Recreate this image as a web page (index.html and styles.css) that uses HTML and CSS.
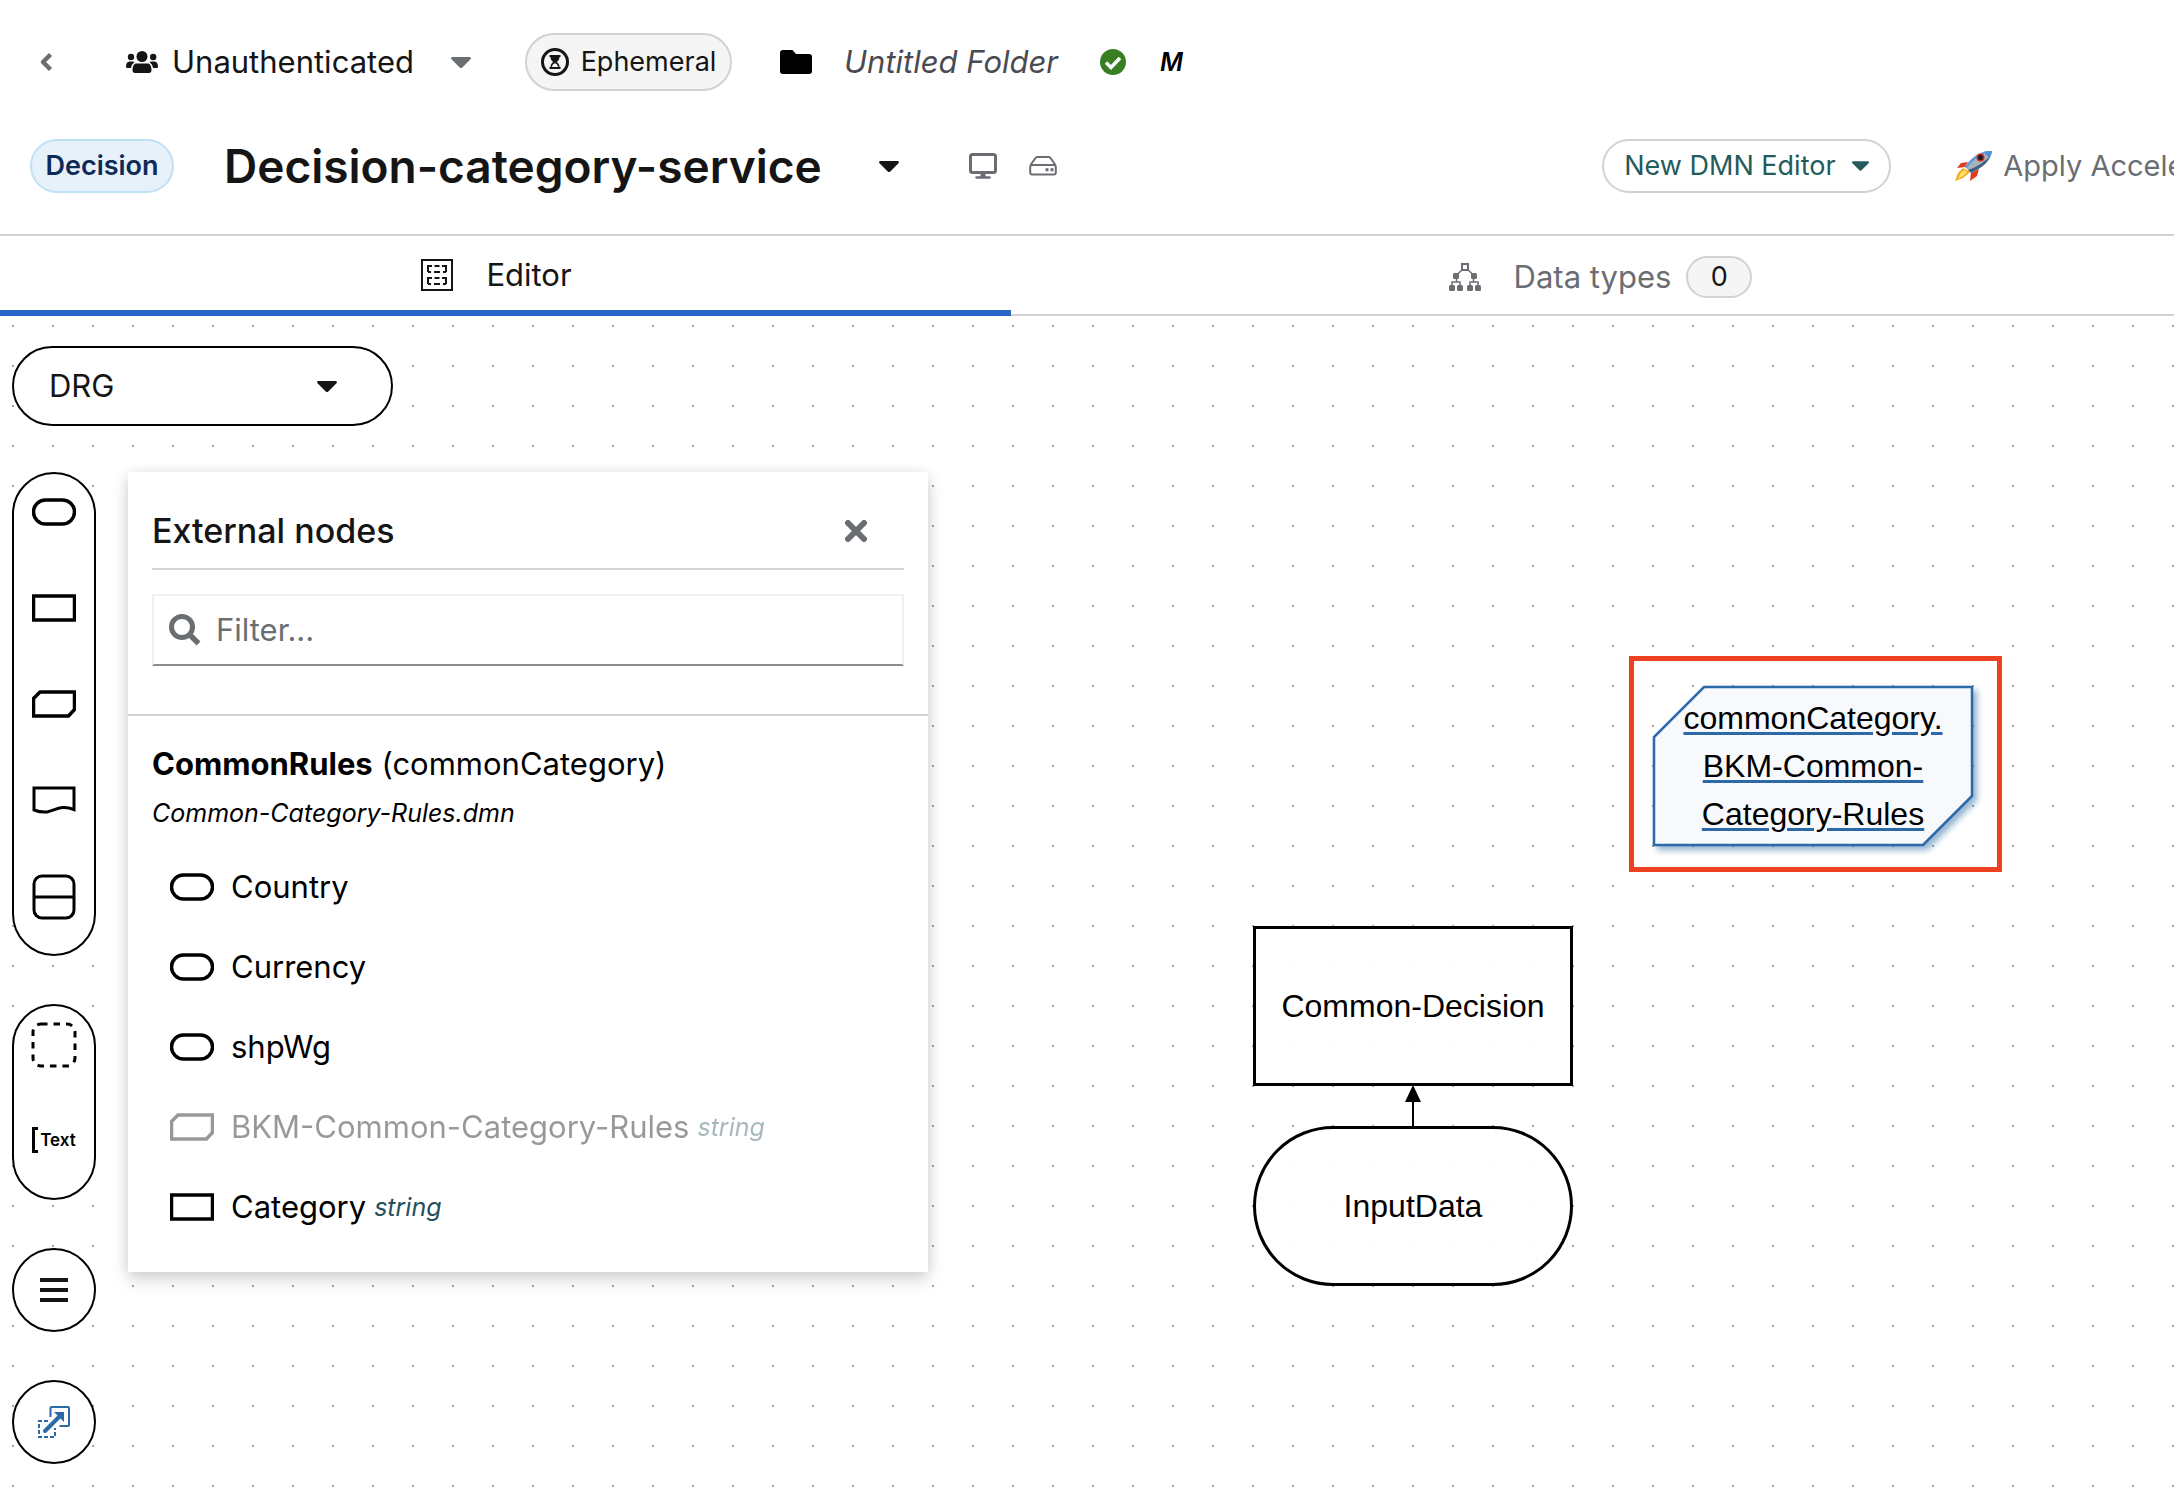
FILE: index.html
```html
<!DOCTYPE html>
<html lang="en">
<head>
<meta charset="utf-8">
<title>Decision-category-service</title>
<link rel="stylesheet" href="styles.css">
</head>
<body>
<svg class="defs" aria-hidden="true">
  <symbol id="caret" viewBox="0 0 20 11"><path d="M1.5 0h17c1.300 0 1.900 1.400 1 2.300l-8.200 8.200a1.800 1.800 0 0 1-2.600 0L.5 2.300C-.4 1.400.2 0 1.500 0z" fill="currentColor"/></symbol>
  <symbol id="input-data" viewBox="0 0 44 28"><rect x="1.500" y="2" width="41" height="24" rx="12" fill="none" stroke="currentColor" stroke-width="3.500"/></symbol>
  <symbol id="decision" viewBox="0 0 44 28"><rect x="1.500" y="2" width="41" height="24" fill="none" stroke="currentColor" stroke-width="3.500"/></symbol>
  <symbol id="bkm" viewBox="0 0 44 28"><path d="M8 2H42.500v17.500L36.500 26h-35V8.500z" fill="none" stroke="currentColor" stroke-width="3.500"/></symbol>
</svg>

<header class="header">
  <div class="context-row">
    <button class="plain back" aria-label="Back"><svg width="14" height="20" viewBox="0 0 14 20"><path d="M11.500 2.500 4 10l7.500 7.500" fill="none" stroke="currentColor" stroke-width="4.500" stroke-linejoin="round"/></svg></button>
    <button class="plain account">
      <svg width="32" height="22" viewBox="0 0 32 22" fill="currentColor"><circle cx="16" cy="5.500" r="5.500"/><circle cx="5" cy="6" r="3.200"/><circle cx="27.200" cy="6" r="3.200"/><path d="M9.500 12.500h13c2.200 1 3 3.600 3 6.500 0 2-.9 3-2.500 3H9c-1.600 0-2.500-1-2.500-3 0-2.900.8-5.500 3-6.500zM3.500 10.500H7l1.500 1C6.300 12.800 5.300 14.600 5 17H1c-.7 0-1-.5-1-1.200 0-3 1.200-5.300 3.500-5.300zM28.500 10.500H25l-1.500 1c2.200 1.300 3.200 3.100 3.500 5.500h4c.7 0 1-.5 1-1.200 0-3-1.200-5.300-3.500-5.300z"/></svg>
      <span class="account-name">Unauthenticated</span>
      <svg class="caret muted"><use href="#caret"/></svg>
    </button>
    <span class="label label-grey">
      <svg width="28" height="28" viewBox="0 0 28 28"><circle cx="14" cy="14" r="12.500" fill="none" stroke="currentColor" stroke-width="3"/><path d="M8.500 7h11v2h-1c0 2.500-1.200 4-3 5 1.800 1 3 2.500 3 5h1v2h-11v-2h1c0-2.500 1.200-4 3-5-1.800-1-3-2.500-3-5h-1z" fill="currentColor"/><path d="M11 19c.2-2 1.300-3 3-3.700 1.700.7 2.800 1.700 3 3.700z" fill="#f5f5f5"/></svg>
      Ephemeral
    </span>
    <div class="folder">
      <svg width="32" height="24" viewBox="0 0 32 24"><path d="M3 0h9.500L16 4h13a3 3 0 0 1 3 3v14a3 3 0 0 1-3 3H3a3 3 0 0 1-3-3V3a3 3 0 0 1 3-3z"/></svg>
      <em>Untitled Folder</em>
    </div>
    <svg class="saved" width="26" height="26" viewBox="0 0 26 26" role="img" aria-label="Saved"><circle cx="13" cy="13" r="13" fill="#377f22"/><path d="m6 13.500 5 5L20 9" fill="none" stroke="#fff" stroke-width="3.500"/></svg>
    <em class="modified">M</em>
  </div>
  <div class="file-row">
    <div class="file-info">
      <span class="label label-blue">Decision</span>
      <h1 class="file-name">Decision-category-service</h1>
      <button class="plain file-toggle" aria-label="Files"><svg class="caret"><use href="#caret"/></svg></button>
      <div class="storage">
        <svg width="28" height="26" viewBox="0 0 28 26" fill="none" stroke="currentColor"><rect x="1.500" y="1.500" width="25" height="18" rx="2" stroke-width="3"/><path d="M14 20v4" stroke-width="5"/><path d="M7.500 24.500h13" stroke-width="2.500" stroke-linecap="round"/></svg>
        <svg width="28" height="20" viewBox="0 0 28 20" fill="none" stroke="currentColor" stroke-width="2"><path d="M1.500 9 6.500 2q.5-1 1.500-1h12q1 0 1.500 1l5 7"/><rect x="1.200" y="9" width="25.600" height="9.500" rx="2"/><path d="M16.500 13.800h3M21.500 13.800h3" stroke-width="3"/></svg>
      </div>
    </div>
    <div class="file-actions">
      <div class="select editor-select">
        <select aria-label="Editor"><option>New DMN Editor</option></select>
        <svg class="caret small"><use href="#caret"/></svg>
      </div>
      <button class="plain accelerator">
        <svg width="38" height="32" viewBox="0 0 38 32"><path d="M13 12 6 13l-4 5 8-1zM24 19l-2 7-7 5 1-8z" fill="#e5381f"/><path d="m8 18-5 5-3 8 8-3 7-6z" fill="#f6a821"/><path d="m9 20-4 4-2 5 5-3 4-4z" fill="#fce56a"/><path d="M37 1C28 0 17 5 10 17l6 6C27 18 36 11 37 1z" fill="#a5b3bd"/><path d="M37 1c-8-.5-19 4-27 16l2 1C19 8 28 3 37 1z" fill="#5b9bdd"/><path d="M36 5c-3 8-10 13-20 18l-3-3C22 17 31 11 36 5z" fill="#41617f"/><path d="M37 1c-3-.2-6 .1-8.500 1l5.500 6c2-2.200 2.900-4.600 3-7z" fill="#4e93d9"/><circle cx="25.500" cy="7.500" r="4" fill="#cf2a1e"/><circle cx="25.500" cy="7.500" r="2.500" fill="#1c1d22"/></svg>
        Apply Accelerator
      </button>
    </div>
  </div>
</header>

<nav class="tabs">
  <button class="tab tab-active">
    <svg width="32" height="32" viewBox="0 0 32 32" fill="none" stroke="currentColor" stroke-width="2"><rect x="1" y="1" width="30" height="30"/><path d="M7 13V7h4M13.500 7h5M21 7h4v6M7 13h3M13 13h6M22 13h3M7 25v-6h4M13.500 19h5M21 19h4v6M7 25h3M13 25h6M22 25h3"/></svg>
    <span>Editor</span>
  </button>
  <button class="tab tab-types">
    <svg width="32" height="28" viewBox="0 0 32 28" fill="currentColor"><path d="M13 1h6v6h-6z" fill="none" stroke="currentColor" stroke-width="2"/><path d="M13 7 7.500 12M19 7l5.500 5M7.500 14v5M3 23v-4h8v4M24.500 14v5M21 23v-4h8v4" fill="none" stroke="currentColor" stroke-width="1.500"/><rect x="4" y="10" width="6" height="6" rx="1.500"/><rect x="22" y="10" width="6" height="6" rx="1.500"/><rect y="22" width="6" height="6" rx="1.500"/><rect x="8" y="22" width="6" height="6" rx="1.500"/><rect x="18" y="22" width="6" height="6" rx="1.500"/><rect x="26" y="22" width="6" height="6" rx="1.500"/></svg>
    <span>Data types</span>
    <span class="badge">0</span>
  </button>
</nav>

<main class="canvas">
  <div class="diagram">
    <svg class="edge" width="16" height="44" viewBox="0 0 16 44"><path d="M8 10v34" stroke="#000" stroke-width="2"/><path d="M8 1l8 17H0z"/></svg>
    <div class="node node-decision">Common-Decision</div>
    <div class="node node-input">InputData</div>
    <div class="highlight"></div>
    <div class="node node-bkm">
      <svg class="bkm-shape" width="320" height="160" viewBox="0 0 320 160"><path d="M51 1H319V110L270 159H1V51z" fill="#f7f9fd" stroke="#2b69a8" stroke-width="2.500"/></svg>
      <span class="bkm-name">commonCategory.<br>BKM-Common-<br>Category-Rules</span>
    </div>
  </div>

  <div class="controls">
    <div class="select drd-select">
      <select aria-label="Diagram"><option>DRG</option></select>
      <svg class="caret"><use href="#caret"/></svg>
    </div>
    <div class="workspace">
      <aside class="palettes">
        <div class="palette palette-nodes">
          <button class="plain" aria-label="Input data"><svg width="44" height="28"><use href="#input-data"/></svg></button>
          <button class="plain" aria-label="Decision"><svg width="44" height="28"><use href="#decision"/></svg></button>
          <button class="plain" aria-label="Business knowledge model"><svg width="44" height="28"><use href="#bkm"/></svg></button>
          <button class="plain" aria-label="Knowledge source"><svg width="44" height="28" viewBox="0 0 44 28" fill="none" stroke="currentColor" stroke-width="3"><path d="M2 2h40v21.500c-13-5-18 .5-27 2.500-5 .5-9-.5-13-2z"/></svg></button>
          <button class="plain" aria-label="Decision service"><svg width="44" height="46" viewBox="0 0 44 46" fill="none" stroke="currentColor" stroke-width="3"><rect x="2" y="2" width="40" height="42" rx="8"/><path d="M2 23h40"/></svg></button>
        </div>
        <div class="palette palette-artifacts">
          <button class="plain" aria-label="Group"><svg width="46" height="46" viewBox="0 0 46 46"><rect x="2" y="2" width="42" height="42" rx="8" fill="none" stroke="currentColor" stroke-width="3" stroke-dasharray="6.500 6"/></svg></button>
          <button class="plain annotation"><svg width="6" height="26" viewBox="0 0 6 26"><path d="M6 1.500H1.500v23H6" fill="none" stroke="currentColor" stroke-width="3"/></svg>Text</button>
        </div>
        <button class="palette round" aria-label="External nodes"><svg width="28" height="26" viewBox="0 0 28 26" stroke="#151515" stroke-width="4"><path d="M0 3h28M0 13h28M0 23h28"/></svg></button>
        <button class="palette round" aria-label="Autolayout"><svg width="32" height="32" viewBox="0 0 32 32" fill="none" stroke="#2b69a8" stroke-width="2"><path d="M12.500 11V2q0-1 1-1H30q1 0 1 1v17q0 1-1 1h-8.500"/><path d="M10 15H1v16h16v-9" stroke-dasharray="4 2"/><path d="M7 25 21 11" stroke-width="4" stroke-linecap="round"/><path d="M16 6h10v10z" fill="#2b69a8" stroke="none"/></svg></button>
      </aside>

      <section class="panel">
        <div class="panel-head">
          <div class="panel-title">
            <h2>External nodes</h2>
            <button class="plain close" aria-label="Close"><svg width="22" height="22" viewBox="0 0 22 22"><path d="m3 3 16 16M19 3 3 19" stroke="currentColor" stroke-width="6" stroke-linecap="round"/></svg></button>
          </div>
          <label class="search">
            <svg width="32" height="32" viewBox="0 0 32 32" fill="none" stroke="currentColor"><circle cx="13" cy="13" r="10.500" stroke-width="5"/><path d="m21 21 8.500 8.500" stroke-width="5.500"/></svg>
            <input type="search" placeholder="Filter..." aria-label="Filter">
          </label>
        </div>
        <div class="panel-body">
          <div class="model"><b>CommonRules</b> (commonCategory)</div>
          <em class="model-file">Common-Category-Rules.dmn</em>
          <ul class="node-list">
            <li><svg width="44" height="28"><use href="#input-data"/></svg>Country</li>
            <li><svg width="44" height="28"><use href="#input-data"/></svg>Currency</li>
            <li><svg width="44" height="28"><use href="#input-data"/></svg>shpWg</li>
            <li class="used"><svg width="44" height="28"><use href="#bkm"/></svg>BKM-Common-Category-Rules<em>string</em></li>
            <li><svg width="44" height="28"><use href="#decision"/></svg>Category<em>string</em></li>
          </ul>
        </div>
      </section>
    </div>
  </div>
</main>
</body>
</html>
```
FILE: styles.css
```css
* { box-sizing: border-box; }

body {
  margin: 0;
  min-height: 100vh;
  display: flex;
  flex-direction: column;
  overflow: hidden;
  background: #fff;
  color: #151515;
  font: 31px/48px Inter, "Liberation Sans", sans-serif;
}

svg { flex: none; display: block; }
.defs { position: absolute; width: 0; height: 0; }

button, select, input { font: inherit; color: inherit; }
button { cursor: pointer; }

.plain {
  padding: 0;
  border: 0;
  background: none;
}

.caret { width: 20px; height: 11px; }
.caret.small { width: 17px; height: 10px; }
.muted { color: #6a6e73; }

.select { display: grid; align-items: center; }
.select select, .select .caret { grid-area: 1 / 1; }
.select select {
  appearance: none;
  width: 100%;
  height: 100%;
  margin: 0;
  border: 0;
  background: none;
  outline: 0;
}
.select .caret { justify-self: end; pointer-events: none; }

/* Header */

.header {
  border-bottom: 2px solid #d2d2d2;
  white-space: nowrap;
  overflow: hidden;
}

.context-row {
  display: flex;
  align-items: center;
  height: 124px;
  padding-left: 39px;
}
.back { color: #6a6e73; }
.account {
  display: flex;
  align-items: center;
  margin-left: 73px;
}
.account-name { width: 293px; padding-left: 14px; text-align: left; }

.label {
  display: flex;
  align-items: center;
  justify-content: center;
  border: 2px solid #d2d2d2;
  border-radius: 30px;
  font-size: 27px;
}
.label-grey {
  gap: 12px;
  width: 207px;
  height: 58px;
  margin-left: 54px;
  background: #f5f5f5;
}
.label-blue {
  width: 144px;
  height: 54px;
  border-color: #bee1f4;
  background: #e7f1fa;
  color: #0f2a57;
  font-weight: 600;
}

.folder {
  display: flex;
  align-items: center;
  gap: 32px;
  width: 320px;
  margin-left: 48px;
  color: #000;
}
.folder em { color: #4a4b50; }
.modified {
  margin-left: 34px;
  color: #000;
  font-size: 25px;
  font-weight: 600;
}

.file-row { display: flex; align-items: center; height: 110px; padding-bottom: 26px; }
.file-info {
  display: flex;
  align-items: center;
  flex: none;
  width: 73.700%;
  padding-left: 30px;
}
.file-name {
  width: 705px;
  margin: 0;
  padding-left: 50px;
  font-size: 46px;
  line-height: 60px;
  font-weight: 600;
}
.storage {
  display: flex;
  align-items: center;
  gap: 32px;
  margin-left: 70px;
  color: #6a6e73;
}
.file-actions { display: flex; align-items: center; flex: none; gap: 64px; }
.editor-select {
  width: 289px;
  height: 54px;
  padding: 0 20px 0 20px;
  border: 2px solid #d2d2d2;
  border-radius: 27px;
  color: #245b5b;
  font-size: 27px;
}
.accelerator {
  display: flex;
  align-items: center;
  gap: 10px;
  color: #6a6e73;
  font-size: 29px;
}

/* Tabs */

.tabs {
  display: grid;
  grid-template-columns: 1011fr 1163fr;
  height: 80px;
}
.tab {
  display: flex;
  align-items: center;
  justify-content: center;
  gap: 33px;
  padding: 4px 0 0;
  border: 0;
  border-bottom: 2px solid #d2d2d2;
  background: none;
  color: #6a6e73;
}
.tab-types { padding-left: 16px; }
.tab-active {
  padding: 4px 18px 0 0;
  border-bottom: 6px solid #2a66c8;
  color: #151515;
}
.badge {
  width: 66px;
  height: 42px;
  margin-left: -18px;
  border: 2px solid #d2d2d2;
  border-radius: 21px;
  background: #f5f5f5;
  color: #151515;
  font-size: 27px;
  line-height: 38px;
}

/* Canvas */

.canvas {
  position: relative;
  flex: 1;
  padding: 30px 12px;
  background: conic-gradient(at 2px 2px, transparent 75%, #a3a3a3 0) 12px 9px / 40px 40px;
}
.diagram { position: absolute; inset: 0; }
.node {
  position: absolute;
  display: flex;
  align-items: center;
  justify-content: center;
  width: 320px;
  height: 160px;
  color: #000;
  font: 32px/48px "Liberation Sans", Arial, sans-serif;
  text-align: center;
}
.node-decision, .node-input {
  left: 1253px;
  border: 3px solid #000;
  background: rgba(255, 255, 255, 0.9);
}
.node-decision { top: 610px; }
.node-input { top: 810px; border-radius: 80px; }
.edge { position: absolute; left: 1405px; top: 768px; }
.highlight {
  position: absolute;
  left: 1629px;
  top: 340px;
  width: 373px;
  height: 216px;
  border: 5px solid #ee4023;
}
.node-bkm { left: 1653px; top: 370px; }
.bkm-shape {
  position: absolute;
  inset: 0;
  overflow: visible;
  filter: drop-shadow(4px 4px 3px rgba(43, 105, 168, 0.5));
}
.bkm-name {
  position: relative;
  text-decoration: underline 3px #2b69a8;
  text-underline-offset: 3px;
}

.controls { position: relative; width: max-content; }
.drd-select {
  width: 381px;
  height: 80px;
  padding: 0 54px 0 35px;
  border: 2px solid #000;
  border-radius: 40px;
  background: #fff;
}
.workspace {
  display: flex;
  align-items: flex-start;
  gap: 32px;
  margin-top: 46px;
}
.palettes { display: flex; flex-direction: column; gap: 48px; }
.palette {
  display: flex;
  flex-direction: column;
  align-items: center;
  width: 84px;
  padding: 0;
  border: 2px solid #000;
  border-radius: 42px;
  background: #fff;
  color: #000;
}
.palette-nodes { gap: 68px; height: 484px; padding-top: 24px; }
.palette-nodes .plain:last-child { margin-top: -8px; }
.palette-artifacts { gap: 58px; height: 196px; padding-top: 16px; }
.annotation {
  display: flex;
  align-items: center;
  gap: 2px;
  font-size: 17px;
  line-height: 28px;
  font-weight: 600;
}
.round { justify-content: center; height: 84px; }

/* External nodes panel */

.panel {
  width: 800px;
  height: 800px;
  background: #fff;
  box-shadow: 0 8px 16px rgba(3, 3, 3, 0.16), 0 0 12px rgba(3, 3, 3, 0.08);
  color: #000;
}
.panel-head {
  height: 244px;
  padding: 18px 24px 0;
  border-bottom: 2px solid #d2d2d2;
}
.panel-title {
  display: flex;
  align-items: center;
  justify-content: space-between;
  height: 80px;
  padding: 3px 37px 0 0;
  border-bottom: 2px solid #d2d2d2;
  color: #151515;
}
.panel-title h2 { margin: 0; font-size: 34px; font-weight: 500; }
.close { color: #6a6e73; }
.search {
  display: flex;
  align-items: center;
  gap: 15px;
  height: 72px;
  margin-top: 24px;
  padding-left: 15px;
  border: 2px solid #f0f0f0;
  border-bottom-color: #8a8d90;
  color: #6a6e73;
}
.search input {
  flex: 1;
  min-width: 0;
  padding: 0;
  border: 0;
  outline: 0;
  background: none;
}
.search input::placeholder { color: #6a6e73; opacity: 1; }
.panel-body { padding: 24px; }
.model b { font-weight: 700; }
.model-file { display: block; font-size: 25px; line-height: 50px; }
.node-list {
  margin: 9px 0 0;
  padding: 0 0 0 18px;
  list-style: none;
}
.node-list li { display: flex; align-items: center; height: 80px; }
.node-list svg { margin-right: 17px; }
.node-list em {
  margin-left: 8px;
  color: #244f5c;
  font-size: 25px;
}
.used { opacity: 0.4; }
```
